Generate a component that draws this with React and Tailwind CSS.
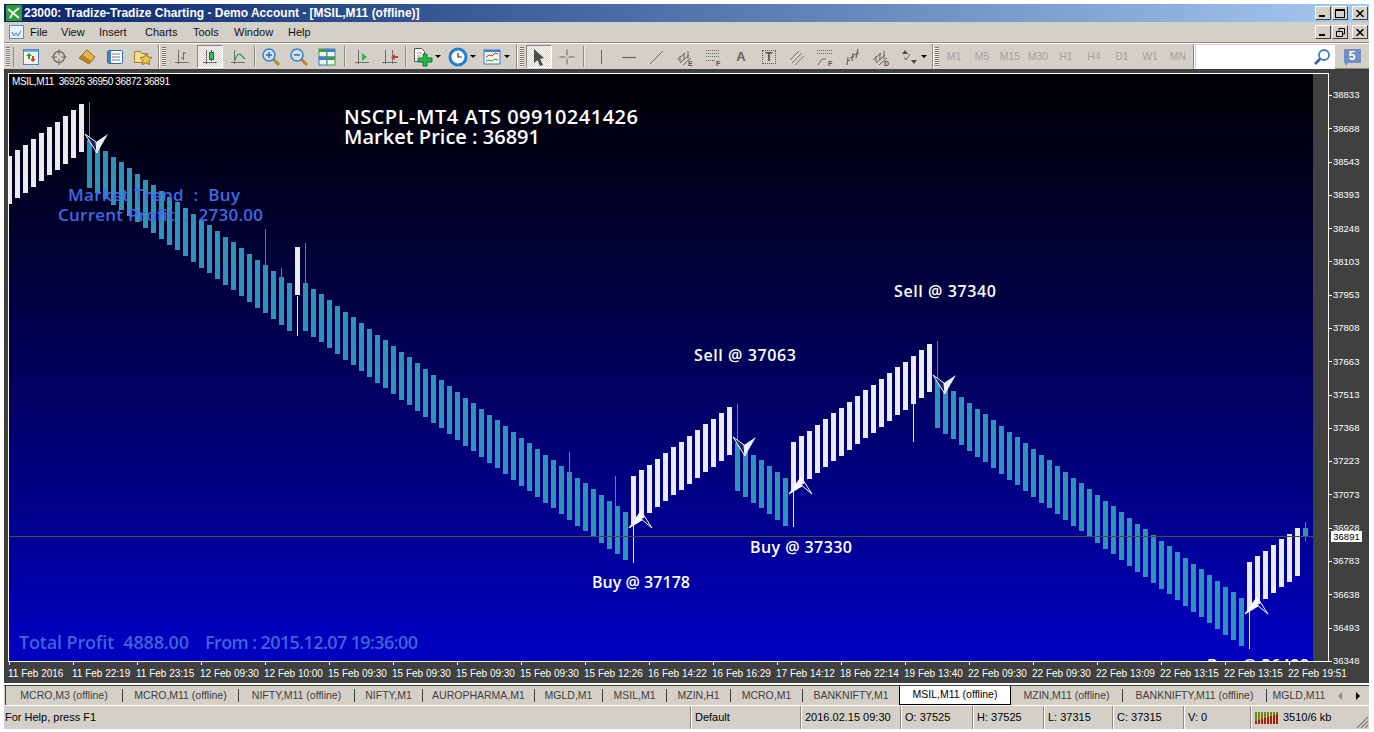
const ui = { fontFamily: '"Liberation Sans", Arial, sans-serif' };

// candle runs read off the chart: [first index, last index, top of first, step, colour]
const WHITE = '#ebebef';
const BLUE = '#3192b8';
const runs = [
  [0, 9, 156, -5.75, WHITE],
  [10, 35, 139.5, 5.72, BLUE],
  [36, 36, 247, 0, WHITE],
  [37, 77, 283, 5.725, BLUE],
  [78, 90, 476, -5.75, WHITE],
  [91, 97, 443, 5.83, BLUE],
  [98, 115, 442, -5.75, WHITE],
  [116, 154, 380, 5.74, BLUE],
  [155, 161, 562, -5.7, WHITE],
];

const candles = [];
runs.forEach(([from, to, top, step, color]) => {
  for (let i = from; i <= to; i++) {
    candles.push({ x: 7 + 8 * i, y: Math.round(top + step * (i - from)), color });
  }
});

const wicks = [
  [89, 102, 140, BLUE], [265, 229, 266, BLUE], [281, 268, 278, BLUE], [297, 296, 336, WHITE],
  [305, 243, 283, BLUE], [569, 452, 472, BLUE], [615, 476, 506, BLUE], [633, 524, 563, WHITE],
  [737, 404, 443, BLUE], [793, 490, 527, WHITE], [913, 404, 442, WHITE], [937, 341, 380, BLUE],
  [1249, 610, 649, WHITE], [1305, 522, 541, BLUE],
];

const sellArrows = [[85, 134], [733, 437], [933, 375]];
const buyArrows = [[629, 528], [789, 494], [1245, 614]];

const chartTexts = [
  ['NSCPL-MT4 ATS 09910241426', 344, 124, 294, 20, '#fff'],
  ['Market Price : 36891', 344, 144, 196, 20, '#fff'],
  ['Market Trend  :  Buy', 68, 201, 172, 17, '#4169e1'],
  ['Current Profit  :  2730.00', 58, 221, 205, 17, '#4169e1'],
  ['Sell @ 37340', 894, 297, 102, 16, '#fff'],
  ['Sell @ 37063', 694, 361, 102, 16, '#fff'],
  ['Buy @ 37330', 750, 553, 102, 16, '#fff'],
  ['Buy @ 37178', 592, 588, 98, 16, '#fff'],
  ['Buy @ 36498', 1207, 671, 102, 16, '#fff'],
  ['Total Profit  4888.00', 19, 649, 170, 18, '#3f63d8'],
  ['From : 2015.12.07 19:36:00', 205, 649, 213, 18, '#3f63d8'],
];

const priceTicks = [
  38833, 38688, 38543, 38393, 38248, 38103, 37953, 37808, 37663, 37513, 37368, 37223, 37073, 36928, 36783, 36638,
  36493, 36348,
];

const timeTicks = [
  '11 Feb 2016', '11 Feb 22:19', '11 Feb 23:15', '12 Feb 09:30', '12 Feb 10:00', '15 Feb 09:30', '15 Feb 09:30',
  '15 Feb 09:30', '15 Feb 09:30', '15 Feb 12:26', '16 Feb 14:22', '16 Feb 16:29', '17 Feb 14:12', '18 Feb 22:14',
  '19 Feb 13:40', '22 Feb 09:30', '22 Feb 09:30', '22 Feb 13:09', '22 Feb 13:15', '22 Feb 13:15', '22 Feb 19:51',
];

const tabs = [
  ['MCRO,M3 (offline)', 117], ['MCRO,M11 (offline)', 116], ['NIFTY,M11 (offline)', 116], ['NIFTY,M1', 68],
  ['AUROPHARMA,M1', 112], ['MGLD,M1', 68], ['MSIL,M1', 64], ['MZIN,H1', 64], ['MCRO,M1', 72], ['BANKNIFTY,M1', 96],
];
const tabsAfter = [['MZIN,M11 (offline)', 112], ['BANKNIFTY,M11 (offline)', 144]];

function Svg({ children, w = 20, h = 20 }) {
  return (
    <svg width={w} height={h} viewBox={`0 0 ${w} ${h}`} fill="none">
      {children}
    </svg>
  );
}

function Grip() {
  return (
    <div className="w-[4px] h-[20px] bg-[repeating-linear-gradient(to_bottom,#77746c_0,#77746c_1px,#f2f0ea_1px,#f2f0ea_2px)]" />
  );
}

function Sep({ w }) {
  return (
    <div className={`${w} h-full flex items-center justify-center`}>
      <div className="w-[2px] h-[21px] bg-[#8d8a83] border-r border-[#eeeae2]" />
    </div>
  );
}

function ToolBreak({ w }) {
  return (
    <div className={`${w} h-full flex justify-center`}>
      <div className="w-[2px] h-full bg-white border-l border-[#8d8a83]" />
    </div>
  );
}

function Tool({ children, active, w = 'w-[28px]' }) {
  return (
    <div className={`${w} h-full flex items-center justify-center`}>
      <div
        className={
          active
            ? 'w-[26px] h-[23px] flex items-center justify-center border border-t-[#8d8a83] border-l-[#8d8a83] border-r-white border-b-white bg-[repeating-conic-gradient(#ffffff_0_25%,#d4d0c8_0_50%)] bg-[length:2px_2px]'
            : 'flex items-center justify-center'
        }
      >
        {children}
      </div>
    </div>
  );
}

function DropArrow() {
  return <div className="ml-[2px] w-0 h-0 border-x-[3px] border-x-transparent border-t-[3px] border-t-black" />;
}

const Axes = () => <path d="M6.5 3v14M3 15.5h14" stroke="#6e6e6e" />;

function NewChartIcon() {
  return (
    <Svg>
      <rect x="2.5" y="2.5" width="15" height="15" fill="#f4f4f0" stroke="#4a86c8" />
      <path d="M3 3h14v2H3z" fill="#7aa8dc" />
      <path d="M8 6l3 3H9v3H7V9H5z" fill="#1f9e3c" />
      <path d="M12 15l-3-3h2V9h2v3h2z" fill="#d0402a" />
    </Svg>
  );
}

function CrossIcon() {
  return (
    <Svg>
      <circle cx="10" cy="10" r="5.5" stroke="#6b6b6b" strokeWidth="1.4" />
      <path d="M10 2v6M10 12v6M2 10h6M12 10h6" stroke="#6b6b6b" />
    </Svg>
  );
}

function TagIcon() {
  return (
    <Svg>
      <path d="M2 11l8-8 8 7-6 7z" fill="#e8b44a" stroke="#8a6420" />
      <path d="M2 11l10 6 2-3-8-6z" fill="#b57f24" />
    </Svg>
  );
}

function ListIcon() {
  return (
    <Svg>
      <rect x="2.5" y="3.5" width="15" height="13" rx="1" fill="#fff" stroke="#2d6cb4" />
      <path d="M3 4h3v12H3z" fill="#3d84cf" />
      <path d="M8 7h7M8 10h7M8 13h7" stroke="#5e7fae" />
      <path d="M7 7h1M7 10h1M7 13h1" stroke="#c8352a" />
    </Svg>
  );
}

function FolderStarIcon() {
  return (
    <Svg>
      <path d="M1.5 4.5h6l1 2h6v9h-13z" fill="#f4dc8a" stroke="#9a8340" />
      <path d="M13 6l1.9 4 4.1.5-3 2.9.8 4.3-3.8-2.1-3.8 2.1.8-4.3-3-2.9 4.1-.5z" fill="#eec04c" stroke="#94762a" />
    </Svg>
  );
}

function BarChartIcon() {
  return (
    <Svg>
      <Axes />
      <path d="M11.5 5v8M9 11h2.5M11.5 6H14" stroke="#2a9a3e" />
    </Svg>
  );
}

function CandleIcon() {
  return (
    <Svg>
      <Axes />
      <path d="M11.5 3v11" stroke="#1d6a2c" />
      <rect x="9.5" y="5.5" width="4" height="7" fill="#37c24f" stroke="#1d6a2c" />
    </Svg>
  );
}

function LineChartIcon() {
  return (
    <Svg>
      <Axes />
      <path d="M7 13c2-6 4-7 6-5l4 4" stroke="#2a9a3e" strokeWidth="1.2" />
    </Svg>
  );
}

function ZoomIcon({ plus }) {
  return (
    <Svg>
      <path d="M12 12l6 6" stroke="#b58a28" strokeWidth="3" />
      <circle cx="8" cy="8" r="6" fill="#cfe4f8" stroke="#3b7fc4" strokeWidth="1.5" />
      <path d="M5 8h6" stroke="#2f6fb4" strokeWidth="1.5" />
      {plus && <path d="M8 5v6" stroke="#2f6fb4" strokeWidth="1.5" />}
    </Svg>
  );
}

function TileIcon() {
  return (
    <Svg>
      <rect x="2" y="2" width="8" height="8" fill="#f4f4f0" stroke="#3f9a52" />
      <path d="M2 2h8v3H2z" fill="#3f9a52" />
      <rect x="10" y="2" width="8" height="8" fill="#f4f4f0" stroke="#3f7fc4" />
      <path d="M10 2h8v3h-8z" fill="#3f7fc4" />
      <rect x="2" y="10" width="8" height="8" fill="#f4f4f0" stroke="#3f7fc4" />
      <path d="M2 10h8v3H2z" fill="#3f7fc4" />
      <rect x="10" y="10" width="8" height="8" fill="#f4f4f0" stroke="#3f9a52" />
      <path d="M10 10h8v3h-8z" fill="#3f9a52" />
    </Svg>
  );
}

function ScrollIcon() {
  return (
    <Svg>
      <Axes />
      <path d="M10 6l5 4-5 4z" fill="#36b04a" />
    </Svg>
  );
}

function ShiftIcon() {
  return (
    <Svg>
      <path d="M5.5 3v14M2 15.5h15M12.5 3v14" stroke="#6e6e6e" />
      <path d="M18 9h-3v-2l-4 3 4 3v-2h3z" fill="#c8402a" />
    </Svg>
  );
}

function NewOrderIcon() {
  return (
    <Svg w={20} h={20}>
      <path d="M1.500 1.500h7l3 3v10h-10z" fill="#fff" stroke="#55534e" />
      <path d="M4 6h5M4 9h4" stroke="#8d8a83" />
      <path d="M10 7h4v4h5v4h-5v4h-4v-4H5v-4h5z" fill="#25b84a" stroke="#12762c" />
    </Svg>
  );
}

function ClockIcon() {
  return (
    <Svg w={20} h={20}>
      <circle cx="10" cy="10" r="8" fill="#fff" stroke="#1f7fd4" strokeWidth="3" />
      <path d="M10 6v4h4" stroke="#333" strokeWidth="1.2" />
    </Svg>
  );
}

function TemplateIcon() {
  return (
    <Svg>
      <rect x="2" y="3" width="16" height="14" fill="#f4f4f0" stroke="#3f7fc4" />
      <path d="M2 3h16v2H2z" fill="#3f7fc4" />
      <path d="M4 10l3-2 3 1 3-3 3 1" stroke="#c0392b" />
      <path d="M4 14l3-1 3 1 3-2 3 1" stroke="#2a9a3e" />
    </Svg>
  );
}

const studyStroke = '#666';

function CursorIcon() {
  return (
    <Svg>
      <path d="M5 2l10 9-4 1 3 6-3 1-2.500-6L5 16z" fill="#4c4c4c" />
    </Svg>
  );
}

function PlusThinIcon() {
  return (
    <Svg>
      <path d="M10 2.500v6M10 11.500v6M2.500 10h6M11.500 10h6" stroke={studyStroke} />
    </Svg>
  );
}

function VLineIcon() {
  return (
    <Svg>
      <path d="M10.500 3v14" stroke={studyStroke} />
    </Svg>
  );
}

function HLineIcon() {
  return (
    <Svg>
      <path d="M3 10.500h14" stroke={studyStroke} strokeWidth="1.2" />
    </Svg>
  );
}

function TrendIcon() {
  return (
    <Svg>
      <path d="M3 17L16 4" stroke={studyStroke} />
    </Svg>
  );
}

function ChannelIcon({ letter }) {
  return (
    <Svg>
      <path d="M2 13l8-7M5 16l9-8M8 18l8-7M5 9v6M9 6v7M13 4v8" stroke={studyStroke} />
      {letter && (
        <text x="13" y="19" fontSize="7" fontWeight="700" fill="#555" fontFamily="Liberation Sans">
          {letter}
        </text>
      )}
    </Svg>
  );
}

function FiboIcon() {
  return (
    <Svg>
      <path d="M3 3.500h13M3 6.500h13M3 9.500h13M3 13.500h9" stroke="#666" strokeDasharray="1 1" />
      <text x="13" y="19" fontSize="7" fontWeight="700" fill="#555" fontFamily="Liberation Sans">
        F
      </text>
    </Svg>
  );
}

function TextIcon() {
  return <span className="text-[13px] font-bold text-[#606060]">A</span>;
}

function LabelIcon() {
  return (
    <div className="w-[14px] h-[14px] border border-dotted border-[#555] flex items-center justify-center text-[12px] leading-none font-bold text-[#555]">
      T
    </div>
  );
}

function ParallelIcon() {
  return (
    <Svg>
      <path d="M3 13l9-9M5 16l10-10M8 18l9-9" stroke="#777" />
    </Svg>
  );
}

function FanIcon() {
  return (
    <Svg>
      <path d="M2 3.500h15M2 6.500h15" stroke="#666" strokeDasharray="1 1" />
      <path d="M3 18l4-6h4" stroke="#666" />
      <text x="13" y="19" fontSize="7" fontWeight="700" fill="#555" fontFamily="Liberation Sans">
        F
      </text>
    </Svg>
  );
}

function PitchIcon() {
  return (
    <Svg>
      <path d="M4 18l1-8M4 14l3-1M9 14l1-8M7 11l4-2M13 11l2-9M11 8l5-2" stroke={studyStroke} strokeWidth="1.2" />
    </Svg>
  );
}

function ArrowsIcon() {
  return (
    <Svg>
      <path d="M3 7l3-4 3 4zM12 13l3 4 3-4z" fill="#4a4a4a" />
      <path d="M5 10l2 3 4-6" stroke="#666" />
    </Svg>
  );
}

function WinButton({ children }) {
  return (
    <div className="w-[16px] h-[14px] bg-[#d4d0c8] border border-t-white border-l-white border-r-[#404040] border-b-[#404040] flex items-center justify-center">
      {children}
    </div>
  );
}

const MinGlyph = () => <div className="w-[6px] h-[2px] bg-black mt-[6px] -ml-[2px]" />;

const CloseGlyph = () => (
  <Svg w={8} h={7}>
    <path d="M0.500 0L7.500 7M7.500 0L0.500 7" stroke="#000" strokeWidth="1.5" />
  </Svg>
);

function Buttons({ restore }) {
  return (
    <div className="flex gap-[1px] items-center pr-[1px]">
      <WinButton>
        <MinGlyph />
      </WinButton>
      <WinButton>
        {restore ? (
          <Svg w={9} h={9}>
            <path d="M3 2.500V.5h5.500V6H6.500M.5 3.500h6v5h-6z" stroke="#000" />
          </Svg>
        ) : (
          <div className="w-[10px] h-[9px] border border-t-2 border-black" />
        )}
      </WinButton>
      <div className="w-[2px]" />
      <WinButton>
        <CloseGlyph />
      </WinButton>
    </div>
  );
}

function ChartDrawing() {
  return (
    <svg className="absolute inset-0 block" width="1304" height="587" viewBox="9 74 1304 587">
      {wicks.map(([x, y1, y2, color], i) => (
        <rect key={i} x={x} y={y1} width="1" height={y2 - y1} fill={color} shapeRendering="crispEdges" />
      ))}
      {candles.map((c, i) => (
        <rect key={i} x={c.x} y={c.y} width="5" height="48" fill={c.color} shapeRendering="crispEdges" />
      ))}
      <rect x="1303" y="528" width="5" height="9" fill={BLUE} shapeRendering="crispEdges" />
      <rect x="9" y="536" width="1304" height="1" fill="#4b4b40" shapeRendering="crispEdges" />
      {sellArrows.map(([x, y], i) => (
        <g key={i} transform={`translate(${x} ${y})`}>
          <path d="M0 0L11 8L12 19Z" fill="#1b1b6a" stroke="#fff" />
          <path d="M11 8L23 0L12 19Z" fill="#eef0fb" />
        </g>
      ))}
      {buyArrows.map(([x, y], i) => (
        <g key={i} transform={`translate(${x} ${y})`}>
          <path d="M11 -10L12 -17L23 0Z" fill="none" stroke="#fff" />
          <path d="M0 0L12 -17L13 -8Z" fill="#fff" stroke="#fff" />
        </g>
      ))}
      {chartTexts.map(([text, x, y, width, size, color]) => (
        <text
          key={text}
          x={x}
          y={y}
          fontSize={size}
          fontWeight="600"
          fill={color}
          textLength={width}
          lengthAdjust="spacing"
          xmlSpace="preserve"
          fontFamily="Open Sans, sans-serif"
        >
          {text}
        </text>
      ))}
      <text x="12" y="85" fontSize="10" fill="#fff" textLength="158" xmlSpace="preserve" fontFamily="Liberation Sans, sans-serif">
        MSIL,M11  36926 36950 36872 36891
      </text>
    </svg>
  );
}

function Tab({ label, width, last }) {
  return (
    <div className="h-full flex items-center shrink-0" style={{ width }}>
      <span className="flex-1 text-center text-[#404040] whitespace-nowrap">{label}</span>
      {!last && <span className="w-px h-[13px] bg-[#404040]" />}
    </div>
  );
}

function Cell({ width, children }) {
  return (
    <div
      className="h-full flex items-center gap-[4px] pl-[4px] border-l border-[#8d8a83] shadow-[inset_1px_0_0_#fff] whitespace-nowrap"
      style={{ width }}
    >
      {children}
    </div>
  );
}

function MemoryBars() {
  const cols = Array.from({ length: 8 }, (_, i) => i);
  return (
    <Svg w={24} h={14}>
      {cols.map(i => {
        const red = 3 + i;
        return (
          <g key={i}>
            <rect x={i * 3} y="1" width="2" height={12 - red} fill="#6f8a10" shapeRendering="crispEdges" />
            <rect x={i * 3} y={13 - red} width="2" height={red} fill="#a81c08" shapeRendering="crispEdges" />
          </g>
        );
      })}
    </Svg>
  );
}

export default function App() {
  return (
    <div
      className="w-[1374px] h-[732px] bg-white overflow-hidden pt-[4px] pl-[4px] pr-[5px] pb-[3px] flex flex-col text-[10.5px] text-black"
      style={ui}
    >
      {/* title bar */}
      <div className="h-[18px] flex items-center justify-between bg-linear-to-r from-[#0a246a] to-[#a6caf0]">
        <div className="flex items-center">
          <div className="ml-[2px] w-[16px] h-[16px] bg-[#2f9a3c] flex items-center justify-center">
            <Svg w={14} h={14}>
              <path d="M1 3l5 4 6-5M6 7l-3 5M6 7l6 5" stroke="#e8f4e0" strokeWidth="2" />
            </Svg>
          </div>
          <span className="ml-[2px] font-bold text-white text-[12px] whitespace-nowrap">
            23000: Tradize-Tradize Charting - Demo Account - [MSIL,M11 (offline)]
          </span>
        </div>
        <Buttons />
      </div>

      {/* menu bar */}
      <div className="h-[20px] shrink-0 flex items-center justify-between bg-[#d4d0c8]">
        <div className="flex items-center">
          <div className="ml-[5px] w-[15px] h-[14px] border border-[#5d90d0] bg-[#e6f0fb] flex items-end justify-center">
            <Svg w={11} h={8}>
              <path d="M1 2l2 4 2-3 2 3 3-5" stroke="#3f7fc4" />
            </Svg>
          </div>
          <div className="ml-[6px] flex text-[11px] text-[#111]">
            <span className="w-[31px]">File</span>
            <span className="w-[38px]">View</span>
            <span className="w-[46px]">Insert</span>
            <span className="w-[48px]">Charts</span>
            <span className="w-[41px]">Tools</span>
            <span className="w-[54px]">Window</span>
            <span>Help</span>
          </div>
        </div>
        <Buttons restore />
      </div>

      {/* toolbars */}
      <div className="h-[27px] shrink-0 border-t border-[#8d8a83] bg-[#d4d0c8] flex items-stretch">
        <div className="w-full flex items-center border-t border-white">
          <div className="w-[13px] h-full flex items-center pl-[2px] gap-[3px]">
            <Grip />
            <div className="w-px h-[20px] bg-[#8d8a83]" />
          </div>
          <Tool><NewChartIcon /></Tool>
          <Tool><CrossIcon /></Tool>
          <Tool><TagIcon /></Tool>
          <Tool><ListIcon /></Tool>
          <Tool><FolderStarIcon /></Tool>
          <ToolBreak w="w-[3px]" />
          <div className="w-[8px] h-full flex items-center justify-center">
            <Grip />
          </div>
          <Tool><BarChartIcon /></Tool>
          <Tool active><CandleIcon /></Tool>
          <Tool><LineChartIcon /></Tool>
          <Sep w="w-[5px]" />
          <Tool><ZoomIcon plus /></Tool>
          <Tool><ZoomIcon /></Tool>
          <Tool><TileIcon /></Tool>
          <Sep w="w-[7px]" />
          <Tool><ScrollIcon /></Tool>
          <Tool><ShiftIcon /></Tool>
          <Sep w="w-[4px]" />
          <Tool w="w-[38px]">
            <NewOrderIcon />
            <DropArrow />
          </Tool>
          <Tool w="w-[31px]">
            <ClockIcon />
            <DropArrow />
          </Tool>
          <Tool w="w-[38px]">
            <TemplateIcon />
            <DropArrow />
          </Tool>
          <ToolBreak w="w-[3px]" />
          <div className="w-[7px] h-full flex items-center justify-center">
            <Grip />
          </div>
          <Tool active><CursorIcon /></Tool>
          <Tool><PlusThinIcon /></Tool>
          <Sep w="w-[6px]" />
          <Tool><VLineIcon /></Tool>
          <Tool><HLineIcon /></Tool>
          <Tool><TrendIcon /></Tool>
          <Tool><ChannelIcon letter="E" /></Tool>
          <Tool><FiboIcon /></Tool>
          <Tool><TextIcon /></Tool>
          <Tool><LabelIcon /></Tool>
          <Tool><ParallelIcon /></Tool>
          <Tool><FanIcon /></Tool>
          <Tool><PitchIcon /></Tool>
          <Tool><ChannelIcon letter="D" /></Tool>
          <Tool w="w-[36px]">
            <ArrowsIcon />
            <DropArrow />
          </Tool>
          <ToolBreak w="w-[3px]" />
          <div className="w-[6px] h-full flex items-center justify-center">
            <Grip />
          </div>
          {['M1', 'M5', 'M15', 'M30', 'H1', 'H4', 'D1', 'W1', 'MN'].map(t => (
            <div key={t} className="w-[28px] text-center text-[#a5a29a]">
              {t}
            </div>
          ))}
          <ToolBreak w="w-[4px]" />
          <div className="flex-1 h-[24px] bg-white flex items-center justify-end">
            <Svg w={18} h={18}>
              <circle cx="11" cy="7" r="5" stroke="#3f7fc4" strokeWidth="1.8" fill="#fff" />
              <path d="M7 11l-5 5" stroke="#2060b0" strokeWidth="2.5" />
            </Svg>
            <div className="ml-[4px] w-[34px] h-full bg-[#d4d0c8] border-b border-[#8d8a83] flex items-center justify-center">
              <div className="relative w-[17px] h-[14px] bg-[#6f8fc4] rounded-[1px] text-white font-bold text-center text-[12px] leading-[14px]">
                5
                <div className="absolute -bottom-[3px] left-[1px] w-0 h-0 border-t-[3px] border-t-[#6f8fc4] border-r-[3px] border-r-transparent" />
              </div>
            </div>
          </div>
        </div>
      </div>

      {/* chart panel */}
      <div className="h-[614px] shrink-0 bg-[#404040] flex pt-[4px] pl-[4px] text-[10px] text-white">
        <div className="w-[1321px] shrink-0 flex flex-col">
          <div className="h-[589px] border border-white flex">
            <div className="relative w-[1304px] h-[587px] overflow-hidden bg-linear-to-b from-[#000005] to-[#0000c4]">
              <ChartDrawing />
            </div>
          </div>
          <div className="flex pl-px">
            {timeTicks.map((t, i) => (
              <div key={i} className="w-[64px] shrink-0">
                <div className="w-px h-[3px] bg-white" />
                <div className="-ml-[1px] mt-[1px] whitespace-nowrap">{t}</div>
              </div>
            ))}
          </div>
        </div>
        <div className="relative flex-1 flex flex-col justify-between pt-[16px] pb-[15px] text-[9.5px]">
          {priceTicks.map(p => (
            <div key={p} className="h-[13px] flex items-center">
              <div className="w-[3px] h-px bg-white" />
              <span className="ml-px">{p}</span>
            </div>
          ))}
          <div className="absolute left-[2px] top-[458px] w-[31px] h-[11px] bg-white text-black text-center leading-[11px]">
            36891
          </div>
        </div>
      </div>

      {/* symbol tabs */}
      <div className="mt-[2px] h-[20px] shrink-0 bg-[#d4d0c8] flex items-center border-t border-[#404040]">
        <div className="ml-px w-px h-full bg-[#404040]" />
        {tabs.map(([label, width], i) => (
          <Tab key={label} label={label} width={width} last={i === tabs.length - 1} />
        ))}
        <div className="w-[112px] shrink-0 h-full bg-white border-x border-b border-black flex items-center justify-center">
          MSIL,M11 (offline)
        </div>
        {tabsAfter.map(([label, width]) => (
          <Tab key={label} label={label} width={width} />
        ))}
        <div className="w-[72px] shrink-0 text-center pr-[8px] text-[#404040] whitespace-nowrap">MGLD,M11</div>
        <div className="w-0 h-0 border-y-[4px] border-y-transparent border-r-[4px] border-r-[#8d8a83] -ml-[1px]" />
        <div className="ml-[14px] w-0 h-0 border-y-[4px] border-y-transparent border-l-[4px] border-l-black" />
      </div>

      {/* status bar */}
      <div className="mt-px h-[23px] shrink-0 bg-[#d4d0c8] flex items-center text-[11px]">
        <div className="w-[686px] pl-px">For Help, press F1</div>
        <Cell width={110}>Default</Cell>
        <Cell width={100}>2016.02.15 09:30</Cell>
        <Cell width={72}>O: 37525</Cell>
        <Cell width={71}>H: 37525</Cell>
        <Cell width={69}>L: 37315</Cell>
        <Cell width={71}>C: 37315</Cell>
        <Cell width={67}>V: 0</Cell>
        <div className="relative flex-1 h-full">
          <Cell>
            <MemoryBars />
            <span>3510/6 kb</span>
          </Cell>
          <div className="absolute right-0 bottom-0">
            <Svg w={15} h={15}>
              <path d="M14 3L3 14M14 7L7 14M14 11L11 14" stroke="#8d8a83" strokeWidth="1.5" />
            </Svg>
          </div>
        </div>
      </div>
    </div>
  );
}
